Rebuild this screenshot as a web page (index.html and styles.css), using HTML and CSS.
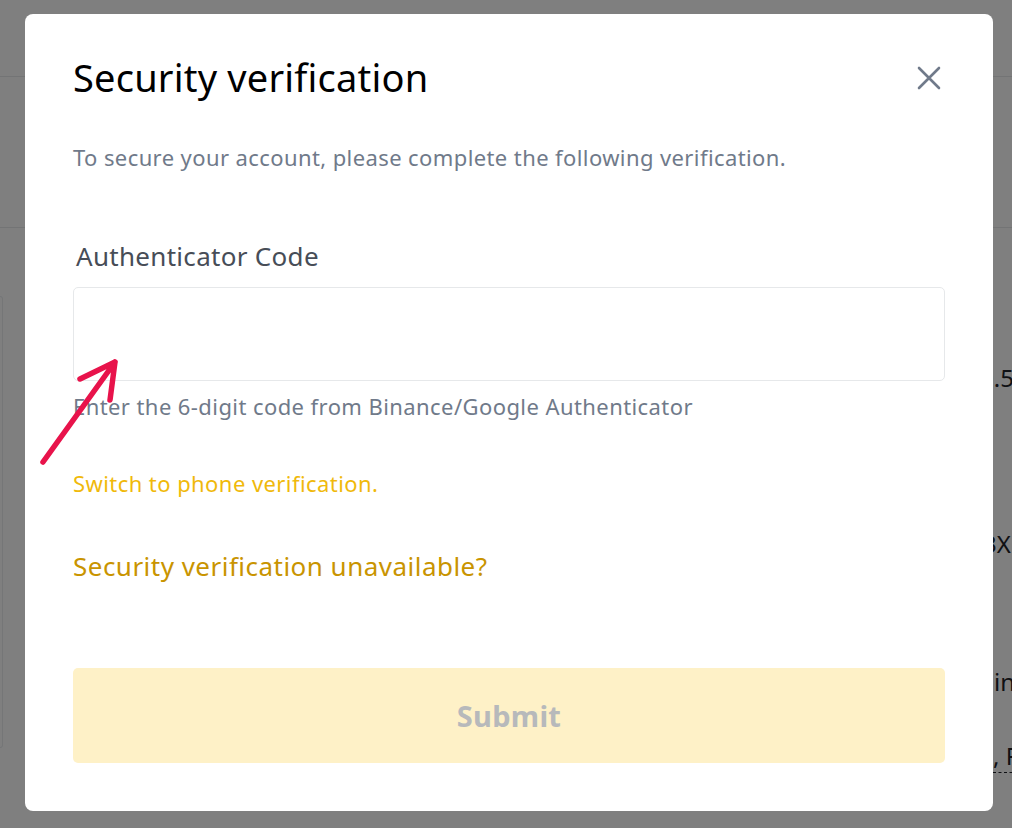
FILE: index.html
```html
<!DOCTYPE html>
<html lang="en">
<head>
<meta charset="utf-8">
<title>Security verification</title>
<link rel="stylesheet" href="styles.css">
</head>
<body>
<div class="page">
  <header class="page-header"></header>
  <section class="page-hero"></section>
  <section class="page-body">
    <div class="left-card"></div>
    <div class="right-col">
      <div class="bg-row row-a">0.5</div>
      <div class="bg-row row-b">3X</div>
      <div class="bg-row row-c">in</div>
      <div class="bg-row row-d"><span class="dashed">, F</span></div>
    </div>
  </section>
</div>
<div class="overlay"></div>
<div class="modal" role="dialog">
  <div class="modal-head">
    <h1 class="title">Security verification</h1>
    <button class="close" aria-label="Close">
      <svg width="24" height="24" viewBox="0 0 24 24"><path d="M2 2L22 22M22 2L2 22" stroke="#707a8a" stroke-width="2.6" stroke-linecap="round" fill="none"/></svg>
    </button>
  </div>
  <p class="subtitle">To secure your account, please complete the following verification.</p>
  <label class="label">Authenticator Code</label>
  <div class="input"></div>
  <p class="helper">Enter the 6-digit code from Binance/Google Authenticator</p>
  <a class="switch">Switch to phone verification.</a>
  <a class="unavailable">Security verification unavailable?</a>
  <button class="submit">Submit</button>
</div>
<svg class="arrow" width="90" height="115" viewBox="0 0 90 115"><path d="M7 107L79 7M44 24L79 7L74 45" stroke="#e8134b" stroke-width="5.5" stroke-linecap="round" stroke-linejoin="round" fill="none"/></svg>
</body>
</html>
```

FILE: styles.css
```css
* { box-sizing: border-box; }
html, body { margin: 0; padding: 0; }
body {
  width: 1012px;
  height: 828px;
  overflow: hidden;
  position: relative;
  font-family: "Noto Sans", "Open Sans", sans-serif;
  background: #ffffff;
  color: #1e2329;
}
.page { width: 1012px; height: 828px; display: flex; flex-direction: column; }
.page-header { height: 77px; border-bottom: 1px solid #e6e8ea; flex: none; }
.page-hero { height: 151px; border-bottom: 1px solid #e6e8ea; flex: none; }
.page-body { display: flex; padding-top: 68px; flex: 1; }
.left-card { width: 3px; height: 452px; border: 1px solid #eaecef; border-left: none; border-radius: 0 4px 4px 0; flex: none; }
.right-col { display: flex; flex-direction: column; flex: 1; white-space: nowrap; font-size: 24px; line-height: 32px; color: #1e2329; }
.bg-row { white-space: nowrap; }
.row-a { margin-top: 66px; margin-left: 977px; }
.row-b { margin-top: 134px; margin-left: 980px; }
.row-c { margin-top: 106px; margin-left: 991px; }
.row-d { margin-top: 42px; margin-left: 990px; }
.dashed { border-bottom: 1px dashed #1e2329; }

.overlay {
  position: absolute; inset: 0;
  background: rgba(0, 0, 0, 0.5);
}
.modal {
  position: absolute;
  left: 25px; top: 14px;
  width: 968px; height: 797px;
  background: #ffffff;
  border-radius: 8px;
  padding: 41px 48px 48px 48px;
  display: flex; flex-direction: column;
}
.modal-head { display: flex; align-items: center; justify-content: space-between; height: 44px; }
.title { margin: 0; font-size: 38px; line-height: 44px; font-weight: 400; color: #000000; letter-spacing: 0.2px; }
.close { border: none; background: none; padding: 0; width: 24px; height: 24px; margin-right: 4px; margin-top: 2px; display: flex; }
.subtitle { margin: 44px 0 0 0; font-size: 22px; line-height: 28px; color: #707a8a; letter-spacing: 0.4px; }
.label { display: block; margin: 69px 0 0 3px; font-size: 26px; line-height: 32px; color: #474d57; letter-spacing: 0.3px; }
.input { margin-top: 15px; height: 94px; border: 1px solid #e6e8ea; border-radius: 5px; }
.helper { margin: 11px 0 0 0; font-size: 22px; line-height: 28px; color: #707a8a; letter-spacing: 0.42px; }
.switch { display: block; margin-top: 49px; font-size: 22px; line-height: 28px; color: #f0b90b; letter-spacing: 0.43px; }
.unavailable { display: block; margin-top: 53px; font-size: 26px; line-height: 32px; color: #c99400; letter-spacing: 0.48px; }
.submit {
  margin-top: 86px; height: 95px; width: 100%;
  border: none; border-radius: 5px;
  background: #fef1c7;
  color: #b7b9bb;
  font-family: "Noto Sans", "Open Sans", sans-serif;
  font-size: 29px; font-weight: 700; letter-spacing: 0.3px;
}
.arrow { position: absolute; left: 36px; top: 355px; }
```
